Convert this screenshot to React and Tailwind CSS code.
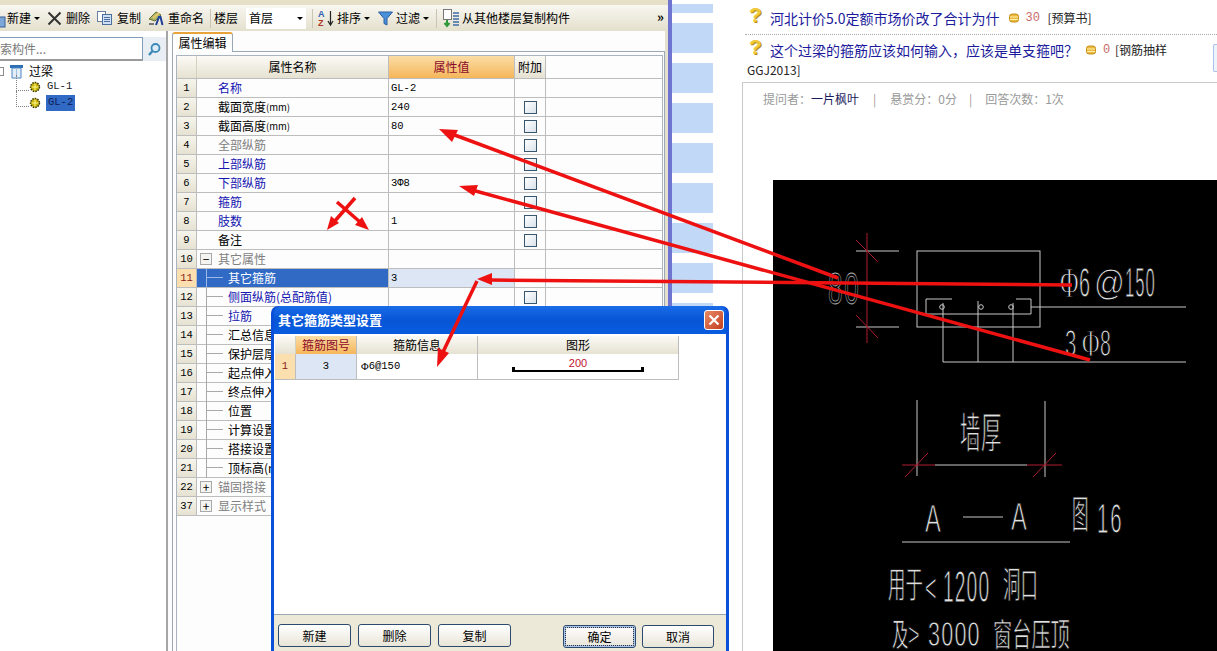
const UI_FONT = { fontFamily: '"Liberation Mono", "Noto Sans CJK SC", monospace' };
const CJK_FONT = '"Noto Sans CJK SC", sans-serif';

const rows = [
  { n: 1, name: '名称', val: 'GL-2', tone: 'text-[#1414b0]' },
  { n: 2, name: '截面宽度', unit: '(mm)', val: '240', check: true },
  { n: 3, name: '截面高度', unit: '(mm)', val: '80', check: true },
  { n: 4, name: '全部纵筋', tone: 'text-[#808080]', check: true },
  { n: 5, name: '上部纵筋', tone: 'text-[#1414b0]', check: true },
  { n: 6, name: '下部纵筋', val: '3Φ8', tone: 'text-[#1414b0]', check: true },
  { n: 7, name: '箍筋', tone: 'text-[#1414b0]', check: true },
  { n: 8, name: '肢数', val: '1', tone: 'text-[#1414b0]', check: true },
  { n: 9, name: '备注', check: true },
  { n: 10, name: '其它属性', tone: 'text-[#808080]', box: '−' },
  { n: 11, name: '其它箍筋', val: '3', child: true, selected: true },
  { n: 12, name: '侧面纵筋', unit: '(总配筋值)', tone: 'text-[#1414b0]', child: true, check: true },
  { n: 13, name: '拉筋', tone: 'text-[#1414b0]', child: true, check: true },
  { n: 14, name: '汇总信息', child: true },
  { n: 15, name: '保护层厚度', child: true },
  { n: 16, name: '起点伸入', child: true },
  { n: 17, name: '终点伸入', child: true },
  { n: 18, name: '位置', child: true },
  { n: 19, name: '计算设置', child: true },
  { n: 20, name: '搭接设置', child: true },
  { n: 21, name: '顶标高(m)', child: true },
  { n: 22, name: '锚固搭接', tone: 'text-[#808080]', box: '+' },
  { n: 37, name: '显示样式', tone: 'text-[#808080]', box: '+' },
];

function Caret() {
  return <span className="mx-[3px] inline-block h-0 w-0 border-x-[3px] border-t-[3px] border-x-transparent border-t-black" />;
}

function Sep() {
  return <span className="mx-[3px] block h-[19px] w-px bg-[#c9c5b2]" />;
}

function Gear() {
  return (
    <svg width="12" height="12" viewBox="0 0 12 12" className="shrink-0">
      <circle cx="6" cy="6" r="4.4" fill="#c9b400" stroke="#3c3c00" strokeWidth="1.6" strokeDasharray="1.5 1" />
      <path d="M2.5 6h7M6 2.5v7" stroke="#fff89a" strokeWidth="1" />
    </svg>
  );
}

function Coin() {
  return (
    <svg width="10" height="10" viewBox="0 0 10 10" className="shrink-0">
      <rect x="0.5" y="1" width="9" height="8" rx="2.5" fill="#e9b93c" stroke="#c98f1c" />
      <path d="M1 4h8M1 6.5h8" stroke="#fff0b0" />
    </svg>
  );
}

function Question() {
  return (
    <span className="mb-[6px] w-[12px] text-center text-[21px] leading-[16px] font-bold text-[#efc93a] [text-shadow:1px_1px_0_#b08a10]" style={{ fontFamily: '"Liberation Sans", sans-serif' }}>?</span>
  );
}

function Toolbar() {
  return (
    <div className="flex h-[26px] items-center bg-gradient-to-b from-[#f8f7f1] to-[#e4e0cd] text-[12px] text-black">
      <svg width="6" height="16" viewBox="0 0 6 16" className="mr-[1px] mt-1 shrink-0">
        <rect x="-5" y="5" width="10" height="10" fill="#7da7d9" stroke="#345e96" />
      </svg>
      <span>新建</span>
      <Caret />
      <svg width="15" height="15" viewBox="0 0 15 15" className="ml-[4px] mr-[4px] shrink-0">
        <path d="M1.5 1.5l12 12M13.5 1.5l-12 12" stroke="#333" strokeWidth="2" />
      </svg>
      <span>删除</span>
      <svg width="15" height="14" viewBox="0 0 15 14" className="ml-[7px] mr-[5px] shrink-0">
        <rect x="0.5" y="0.5" width="8" height="10" fill="#fff" stroke="#6a7fa0" />
        <rect x="5.5" y="3.5" width="9" height="10" fill="#cfe0f5" stroke="#4d6f9f" />
        <path d="M7 6.5h6M7 8.5h6M7 10.5h6" stroke="#4d6f9f" />
      </svg>
      <span>复制</span>
      <svg width="16" height="16" viewBox="0 0 16 16" className="ml-[7px] mr-[4px] shrink-0">
        <path d="M1 9l7-7 5 3-6 6z" fill="#a7b86a" stroke="#6b6b30" />
        <path d="M5 8l6-5" stroke="#e7c76a" strokeWidth="2" />
        <path d="M8 15l3-8h1.5l2 8" fill="none" stroke="#1d3f9a" strokeWidth="2" />
        <path d="M1 14h5" stroke="#777" strokeWidth="2" />
      </svg>
      <span>重命名</span>
      <span className="ml-[3px]"><Sep /></span>
      <span className="w-[26px] shrink-0">楼层</span>
      <div className="ml-[6px] flex h-[21px] w-[60px] items-center justify-between bg-white pl-[3px] pr-[2px]">
        <span>首层</span>
        <span className="mr-[1px] h-0 w-0 border-x-[3px] border-t-[3px] border-x-transparent border-t-black" />
      </div>
      <span className="ml-[3px]"><Sep /></span>
      <svg width="17" height="18" viewBox="0 0 17 18" className="ml-[2px] mr-[2px] shrink-0">
        <text x="0" y="8" fontSize="9" fontWeight="700" fill="#2f5fb0" fontFamily="Liberation Sans">A</text>
        <text x="0" y="17" fontSize="9" fontWeight="700" fill="#b03a2a" fontFamily="Liberation Sans">Z</text>
        <path d="M12.5 2v13M10 12l2.5 4 2.5-4" fill="none" stroke="#222" strokeWidth="1.2" />
      </svg>
      <span>排序</span>
      <Caret />
      <svg width="15" height="15" viewBox="0 0 15 15" className="ml-[5px] mr-[3px] shrink-0">
        <path d="M0.5 1h14L9 7.5V14l-3-1.5v-5z" fill="#4a90d9" stroke="#2a5f9f" />
      </svg>
      <span>过滤</span>
      <Caret />
      <span className="ml-[1px]"><Sep /></span>
      <svg width="18" height="20" viewBox="0 0 18 20" className="ml-[2px] mr-[2px] shrink-0">
        <rect x="1.5" y="1.5" width="8" height="10" fill="#fff" stroke="#777" />
        <path d="M11 5h6M11 8h6M11 11h6M11 14h6M11 17h6" stroke="#3c6ea8" strokeWidth="1.5" />
        <path d="M5 12v5M2.5 15l2.5 3 2.5-3" fill="none" stroke="#2f9a3c" strokeWidth="2" />
      </svg>
      <span>从其他楼层复制构件</span>
      <span className="ml-auto mb-[4px] mr-[4px] text-[13px] font-bold leading-none">»</span>
    </div>
  );
}

function Sidebar() {
  return (
    <aside className="flex w-[168px] shrink-0 flex-col border-r-2 border-[#a6a6a6] bg-white pt-[6px] text-[12px]">
      <div className="flex h-[24px] items-center">
        <div className="flex h-full w-[143px] items-center overflow-hidden border border-b-2 border-l-0 border-[#7f9db9] border-b-[#9a9a9a] text-[#7a7a7a]">索构件...</div>
        <div className="flex h-full w-[23px] items-center justify-center bg-[#e9eef4]">
          <svg width="15" height="15" viewBox="0 0 15 15">
            <circle cx="8.5" cy="6" r="4" fill="#dcecf8" stroke="#3d89b8" strokeWidth="1.8" />
            <path d="M5.5 9L2 13" stroke="#3d89b8" strokeWidth="2.4" />
          </svg>
        </div>
      </div>
      <div className="mt-[2px] flex h-[16px] items-center">
        <span className="h-[9px] w-[4px] border-y border-r border-[#8a8a8a]" />
        <svg width="15" height="15" viewBox="0 0 15 15" className="ml-[5px] mr-[5px] shrink-0">
          <rect x="1" y="1" width="13" height="3" fill="#2c6fb5" />
          <path d="M3 4h9v10H3z" fill="#e4eef8" stroke="#4a86c0" />
          <path d="M7.5 4v10" stroke="#9fc2e2" />
        </svg>
        <span>过梁</span>
      </div>
      <div className="ml-[16px] flex h-[16px] items-center">
        <span className="mb-[8px] h-[16px] w-[13px] border-b border-l border-dotted border-[#808080]" />
        <Gear />
        <span className="ml-[5px] px-px text-[10.5px] text-[#222]" style={UI_FONT}>GL-1</span>
      </div>
      <div className="ml-[16px] flex h-[16px] items-center">
        <span className="mb-[8px] h-[16px] w-[13px] border-b border-l border-dotted border-[#808080]" />
        <Gear />
        <span className="ml-[5px] bg-[#316ac5] px-[2px] text-[10.5px] text-[#101a55]" style={UI_FONT}>GL-2</span>
      </div>
    </aside>
  );
}

function PropRow({ row }) {
  const { n, name, unit, val, tone, check, box, child, selected } = row;
  return (
    <div className="flex h-[19px] border-b border-[#bdbdbd] text-[12px] leading-[18px]">
      <div className={`flex w-[20px] shrink-0 items-center justify-center border-r border-[#bdbdbd] text-[10.5px] ${selected ? 'bg-[#fbdfae] text-[#8b1a1a]' : 'bg-gradient-to-b from-[#f6f5ec] to-[#e6e2d2] text-black'}`} style={UI_FONT}>{n}</div>
      <div className={`flex w-[192px] shrink-0 items-center border-r border-[#bdbdbd] ${selected ? 'bg-[#316ac5] text-white' : tone || 'text-black'}`}>
        {box && (
          <span className="ml-[3px] mr-[6px] flex h-[12px] w-[12px] items-center justify-center border border-[#a9a9a9] bg-[#f4f4f0] text-[12px] leading-none text-black">{box}</span>
        )}
        {child && (
          <span className={`ml-[9px] mr-[5px] h-[19px] w-[17px] shrink-0 border-l ${selected ? 'border-[#9db8e4]' : 'border-[#a9a9a9]'}`}>
            <span className={`block h-[9px] w-full border-b ${selected ? 'border-[#9db8e4]' : 'border-[#a9a9a9]'}`} />
          </span>
        )}
        {!box && !child && <span className="w-[21px] shrink-0" />}
        <span className="whitespace-nowrap">{name}</span>
        {unit && <span className={`whitespace-nowrap ${unit === '(mm)' ? 'text-[9.5px]' : ''}`}>{unit}</span>}
      </div>
      <div className={`flex w-[126px] shrink-0 items-center border-r border-[#bdbdbd] pl-[2px] text-[10.5px] ${selected ? 'bg-[#dce6f4]' : ''}`} style={UI_FONT}>{val}</div>
      <div className="flex w-[31px] shrink-0 items-center justify-center border-r border-[#bdbdbd]">
        {check && <span className="h-[13px] w-[13px] border border-[#39566f] bg-gradient-to-br from-white to-[#d9e2ea]" />}
      </div>
    </div>
  );
}

function PropPanel() {
  return (
    <main className="flex min-w-0 flex-1 flex-col border-r-[3px] border-[#e4e0cd] bg-[#fdfdfd] pl-[4px] pt-px">
      <div className="relative z-10 -mb-px flex h-[20px] w-[61px] items-center justify-center rounded-t-[3px] border border-b-0 border-t-2 border-[#9aa8b5] border-t-[#e8a33a] bg-white text-[12px]">属性编辑</div>
      <div className="flex-1 border-x border-t border-[#9aa8b5] pl-[3px] pr-[1px] pt-[3px]">
        <div className="h-full border-x border-t border-[#a9b4be]">
          <div className="flex h-[23px] border-b border-[#bdbdbd] text-[12px]">
            <div className="w-[20px] shrink-0 border-r border-[#d5d1c0] bg-gradient-to-b from-[#fbfaf5] to-[#e6e2d2]" />
            <div className="flex w-[192px] shrink-0 items-center justify-center border-r border-[#bdbdbd] bg-gradient-to-b from-[#fbfaf5] to-[#e6e2d2]">属性名称</div>
            <div className="flex w-[126px] shrink-0 items-center justify-center border-r border-[#bdbdbd] bg-gradient-to-b from-[#fbdda4] to-[#f5b658] text-[#8b0a2a]">属性值</div>
            <div className="flex w-[31px] shrink-0 items-center justify-center border-r border-[#bdbdbd] bg-gradient-to-b from-[#fbfaf5] to-[#e6e2d2]">附加</div>
          </div>
          {rows.map((row) => <PropRow key={row.n} row={row} />)}
        </div>
      </div>
    </main>
  );
}

function DlgButton({ label, focus, className }) {
  return (
    <button className={`flex h-[23px] items-center justify-center rounded-[3px] border border-[#2c4a6e] bg-gradient-to-b from-white to-[#e8e5d8] text-[12px] text-black ${focus ? 'shadow-[inset_0_0_0_2px_#a9c3ea] outline-1 -outline-offset-3 outline-[#333] outline-dotted' : ''} ${className}`}>{label}</button>
  );
}

function Dialog() {
  return (
    <div className="absolute left-[271px] top-[306px] flex h-[345px] w-[458px] flex-col rounded-t-[7px] bg-[#0a50d8] px-[3px] text-[12px]">
      <div className="flex h-[28px] shrink-0 items-center justify-between rounded-t-[7px] bg-gradient-to-b from-[#1a6ce8] via-[#0655d6] to-[#0a5ce0] pl-[4px] pr-[2px]">
        <span className="text-[13px] font-bold text-white">其它箍筋类型设置</span>
        <span className="flex h-[20px] w-[20px] items-center justify-center rounded-[3px] border border-white bg-gradient-to-br from-[#e88a66] to-[#c23c1c]">
          <svg width="12" height="12" viewBox="0 0 12 12"><path d="M1.5 1.5l9 9M10.5 1.5l-9 9" stroke="#fff" strokeWidth="2.2" /></svg>
        </span>
      </div>
      <div className="flex min-h-0 flex-1 flex-col bg-white pl-[1px] pt-[2px]">
        <div className="flex h-[18px]">
          <div className="w-[21px] shrink-0 border-r border-[#d5d1c0] bg-gradient-to-b from-[#fbfaf5] to-[#e6e2d2]" />
          <div className="flex w-[61px] shrink-0 items-center justify-center border-r border-[#bdbdbd] bg-gradient-to-b from-[#fbdda4] to-[#f5b658] text-[#8b0a2a]">箍筋图号</div>
          <div className="flex w-[121px] shrink-0 items-center justify-center border-r border-[#bdbdbd] bg-gradient-to-b from-[#fbfaf5] to-[#e6e2d2]">箍筋信息</div>
          <div className="flex w-[201px] shrink-0 items-center justify-center border-r border-[#bdbdbd] bg-gradient-to-b from-[#fbfaf5] to-[#e6e2d2]">图形</div>
        </div>
        <div className="flex h-[26px] w-[404px] border-b border-[#bdbdbd]">
          <div className="flex w-[21px] shrink-0 items-center justify-center border-r border-[#bdbdbd] bg-[#fbdfae] text-[10.5px] text-[#8b1a1a]" style={UI_FONT}>1</div>
          <div className="flex w-[61px] shrink-0 items-center justify-center border-r border-[#bdbdbd] bg-[#dce6f4] text-[10.5px]" style={UI_FONT}>3</div>
          <div className="flex w-[121px] shrink-0 items-center border-r border-[#bdbdbd] pl-[4px] text-[10.5px]" style={UI_FONT}><span style={{ fontFamily: '"Liberation Serif", serif' }}>Φ</span>6@150</div>
          <div className="flex w-[201px] shrink-0 flex-col items-center border-r border-[#bdbdbd] pt-[4px]">
            <span className="h-[11px] text-[11px] leading-[11px] text-[#c41230]" style={{ fontFamily: '"Liberation Sans", sans-serif' }}>200</span>
            <span className="-mt-[2px] h-[5px] w-[132px] shrink-0 border-x-[3px] border-b-[2px] border-black" />
          </div>
        </div>
      </div>
      <div className="flex h-[37px] shrink-0 border-t border-[#9aa8b5] bg-[#ece9d8] pl-[4px] pr-[12px] pt-[9px]">
        <DlgButton label="新建" className="w-[73px]" />
        <DlgButton label="删除" className="ml-[7px] w-[73px]" />
        <DlgButton label="复制" className="ml-[7px] w-[73px]" />
        <DlgButton label="确定" focus className="ml-auto mt-px w-[73px]" />
        <DlgButton label="取消" className="ml-[6px] mt-px w-[72px]" />
      </div>
    </div>
  );
}

function Stripes() {
  return (
    <div className="flex h-full w-[41px] shrink-0 flex-col gap-[10px] overflow-hidden pt-[4px]">
      <div className="h-[9px] shrink-0 bg-[#c1d9f7]" />
      {[0, 1, 2, 3, 4, 5, 6, 7, 8, 9, 10, 11, 12, 13, 14, 15].map((i) => (
        <div key={i} className="h-[30px] shrink-0 bg-[#c1d9f7]" />
      ))}
    </div>
  );
}

function CadDrawing() {
  const line = '#c8c8c8';
  const red = '#b01c2c';
  return (
    <svg viewBox="773 180 444 471" className="h-full w-full" style={{ fontFamily: CJK_FONT }}>
      <rect x="773" y="180" width="444" height="471" fill="#000" />
      <g stroke={line} strokeWidth="1" fill="none">
        <rect x="917" y="251" width="123" height="76" />
        <path d="M856 251h43M856 327h43" />
        <path d="M952 299h-26v15h105v-15h-15" />
        <circle cx="942" cy="307" r="2.3" />
        <circle cx="981" cy="307" r="2.3" />
        <circle cx="1011" cy="307" r="2.3" />
        <path d="M943 303v59M978 301v61M1013 303v59M943 362h243M1031 307h155" />
        <path d="M917 400v76M1045 401v76M935 465h92M902 542h168M963 517h40" />
      </g>
      <g stroke={red} strokeWidth="1" fill="none">
        <path d="M867 233v110M856 240l22 22M856 315l22 23" />
        <path d="M902 465h33M1027 465h35M905 477l23-24M1033 477l23-24" />
      </g>
      {/* 80 is hollow in the drawing, the rest is thin: black stroke eats into the fill */}
      <g fill="none" stroke="#b5b5b5" strokeWidth="0.5" fontFamily="Liberation Sans">
        <text transform="translate(828 304) scale(0.9 1.5)" fontSize="29" letterSpacing="2">80</text>
      </g>
      <g fill="#e0e0e0" stroke="#000" strokeWidth="0.9" fontFamily="Liberation Sans">
        <text transform="translate(1060 297) scale(0.82 1.35)" fontSize="31" fontFamily="Liberation Serif">Φ</text>
        <text transform="translate(1079 297) scale(0.62 1.35)" fontSize="32">6</text>
        <text transform="translate(1094 295) scale(0.95 1.1)" fontSize="32">@</text>
        <text transform="translate(1125 297) scale(0.52 1.35)" fontSize="32" letterSpacing="2">150</text>
        <text transform="translate(1065 356) scale(0.68 1.25)" fontSize="30">3</text>
        <text transform="translate(1082 356) scale(0.8 1.25)" fontSize="30" fontFamily="Liberation Serif">Φ</text>
        <text transform="translate(1100 356) scale(0.65 1.25)" fontSize="30">8</text>
        <text transform="translate(925 532) scale(0.72 1.2)" fontSize="33">A</text>
        <text transform="translate(1011 530) scale(0.72 1.2)" fontSize="33">A</text>
        <text transform="translate(1097 533) scale(0.62 1.3)" fontSize="33" letterSpacing="3">16</text>
        <text transform="translate(925 602) scale(0.6 1.25)" fontSize="33">&lt;</text>
        <text transform="translate(943 602) scale(0.55 1.25)" fontSize="35" letterSpacing="2">1200</text>
        <text transform="translate(908 646) scale(0.6 1.0)" fontSize="33">&gt;</text>
        <text transform="translate(928 646) scale(0.6 1.0)" fontSize="36" letterSpacing="2">3000</text>
      </g>
      <g fill="#e0e0e0" stroke="#000" strokeWidth="0.7">
        <text transform="translate(960 448) scale(0.68 1.4)" fontSize="30" letterSpacing="1">墙厚</text>
        <text transform="translate(1072 528) scale(0.55 1.3)" fontSize="30">图</text>
        <text transform="translate(888 598) scale(0.58 1.2)" fontSize="30">用于</text>
        <text transform="translate(1003 598) scale(0.58 1.2)" fontSize="30">洞口</text>
        <text transform="translate(892 646) scale(0.55 1.05)" fontSize="30">及</text>
        <text transform="translate(993 646) scale(0.64 1.05)" fontSize="30">窗台压顶</text>
      </g>
    </svg>
  );
}

function QaColumn() {
  return (
    <section className="flex min-w-0 flex-1 flex-col text-[12px]">
      <div className="flex h-[34px] items-center pl-[36px] pt-[2px]">
        <Question />
        <span className="ml-[9px] text-[14px] text-[#1a1a9c]">河北计价5.0定额市场价改了合计为什</span>
        <span className="ml-[10px]"><Coin /></span>
        <span className="ml-[6px] w-[22px] text-[#c86a6a]" style={UI_FONT}>30</span>
        <span className="text-[#222]">[预算书]</span>
      </div>
      <div className="ml-[32px] border-t border-dotted border-[#aaaaaa]" />
      <div className="relative flex h-[25px] items-center pl-[36px] pt-[5px]">
        <Question />
        <span className="ml-[9px] text-[14px] text-[#1a1a9c]">这个过梁的箍筋应该如何输入，应该是单支箍吧？</span>
        <span className="ml-[8px]"><Coin /></span>
        <span className="ml-[7px] w-[12px] text-[#c86a6a]" style={UI_FONT}>0</span>
        <span className="text-[#222]">[钢筋抽样</span>
        <span className="absolute right-0 top-[9px] h-[28px] w-[4px] rounded-l-[2px] border border-r-0 border-[#a9c3ea] bg-[#eef4fb]" />
      </div>
      <div className="h-[22px] pl-[34px] leading-[20px] text-[#222]">GGJ2013]</div>
      <div className="ml-[29px] flex min-h-0 flex-1 flex-col border-l border-t border-[#c9c9c9]">
        <div className="flex h-[97px] items-start pl-[20px] pt-[7px] text-[#999999]">
          <span>提问者：<span className="text-[#1a1a5c]">一片枫叶</span></span>
          <span className="ml-[14px]">|</span>
          <span className="ml-[14px]">悬赏分：0分</span>
          <span className="ml-[12px]">|</span>
          <span className="ml-[13px]">回答次数：1次</span>
        </div>
        <div className="ml-[30px] min-h-0 flex-1"><CadDrawing /></div>
      </div>
    </section>
  );
}

function Arrows() {
  const red = '#ee1111';
  return (
    <svg viewBox="0 0 1217 651" className="pointer-events-none absolute left-0 top-0 h-[651px] w-[1217px]">
      <g stroke={red} strokeWidth="3.5" fill="none">
        <path d="M452 134L838 278" />
        <path d="M472 190L1090 360" />
        <path d="M490 280L1072 285" />
        <path d="M477 281L443 352" />
        <path d="M355 198L334 222M337 202L360 222" />
      </g>
      <g fill={red}>
        <path d="M439 129l19 1-6 12z" />
        <path d="M459 186l19-1-4 11z" />
        <path d="M477 279l15-6v12z" />
        <path d="M437 367l1-19 11 5z" />
        <path d="M327 230l4-14 8 7z" />
        <path d="M369 230l-14-5 7-8z" />
      </g>
    </svg>
  );
}

export default function App() {
  return (
    <div className="relative flex h-[651px] w-[1217px] overflow-hidden bg-white" style={{ fontFamily: CJK_FONT }}>
      <div className="flex h-full w-[668px] shrink-0 flex-col bg-[#e8e4d0]">
        <div className="h-[5px] shrink-0 bg-[#e6e0c8]" />
        <Toolbar />
        <div className="flex min-h-0 flex-1 bg-white">
          <Sidebar />
          <PropPanel />
        </div>
      </div>
      <div className="h-full w-[4px] shrink-0 bg-[#6e74cf]" />
      <Stripes />
      <QaColumn />
      <Dialog />
      <Arrows />
    </div>
  );
}
